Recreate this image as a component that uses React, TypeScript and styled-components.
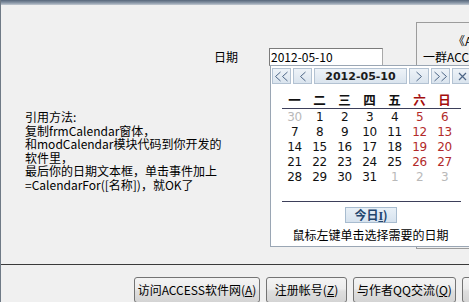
import { createGlobalStyle } from "styled-components";
import styled from "styled-components";

const GlobalStyle = createGlobalStyle`
    html, body {
        margin: 0;
        padding: 0;
        background: #f0f0f0;
        overflow: hidden;
    }
    body {
        font-family: "Noto Sans CJK SC", "Liberation Sans", sans-serif;
        font-size: 12px;
        color: #000;
    }
`;

const Window = styled.div`
    width: 469px;
    height: 302px;
    overflow: hidden;
    border-left: 1px solid #6f7a86;
    box-sizing: border-box;
    position: relative;
`;

const TopBar = styled.div`
    height: 5px;
    margin-left: -1px;
    background: linear-gradient(#56667a, #8d9aaa 60%, #c3cad2);
`;

const Main = styled.div`
    position: relative;
    display: flex;
    border-bottom: 1px solid #3a3a3a;
    box-sizing: border-box;
    height: 260px;
`;

const LeftCol = styled.div`
    flex: 0 0 415px;
    padding: 43px 0 0 24px;
    box-sizing: border-box;
`;

const DateRow = styled.div`
    display: flex;
    align-items: center;
    margin-left: 189px;
    height: 18px;
`;

const DateLabel = styled.span`
    width: 55px;
    line-height: 18px;
`;

const DateInput = styled.div`
    width: 114px;
    height: 18px;
    box-sizing: border-box;
    background: #fff;
    border: 1px solid #a9a9a9;
    border-top-color: #7b7b7b;
    border-left-color: #7b7b7b;
    padding-left: 1px;
    line-height: 16px;
`;

const Instructions = styled.div`
    margin-top: 44px;
    line-height: 13.5px;
    white-space: nowrap;
`;

const RightBox = styled.div`
    flex: 0 0 170px;
    margin-top: 17px;
    height: 227px;
    box-sizing: border-box;
    border: 1px solid #9c9c9c;
    padding: 11px 0 0 6px;
    line-height: 14px;
    white-space: nowrap;
`;

const BoxTitle = styled.div`
    padding-left: 30px;
    margin-bottom: 2px;
`;

const Calendar = styled.div`
    position: absolute;
    left: 269px;
    top: 60px;
    width: 206px;
    height: 182px;
    box-sizing: border-box;
    background: #fff;
    border: 1px solid #9aa6b4;
    padding: 2px 0 0 1px;
    display: flex;
    flex-direction: column;
`;

const NavRow = styled.div`
    display: flex;
    gap: 2px;
    height: 16px;
`;

const NavButton = styled.div<{ $w: number }>`
    flex: 0 0 ${(p) => p.$w}px;
    height: 16px;
    box-sizing: border-box;
    border: 1px solid #b3c2d2;
    background: linear-gradient(#eef3f8, #dae4ee);
    display: flex;
    align-items: center;
    justify-content: center;
    color: #1b1b1b;
    font-family: "DejaVu Sans", sans-serif;
    font-weight: bold;
    font-size: 11px;
`;

const Content = styled.div`
    margin-left: 10px;
    width: 179px;
    display: flex;
    flex-direction: column;
`;

const Grid = styled.div<{ $row: number; $top: number }>`
    display: grid;
    grid-template-columns: repeat(7, 25px);
    grid-auto-rows: ${(p) => p.$row}px;
    margin-top: ${(p) => p.$top}px;
`;

const WeekDay = styled.div<{ $red?: boolean }>`
    text-align: center;
    line-height: 16px;
    font-weight: bold;
    font-size: 12.5px;
    color: ${(p) => (p.$red ? "#a40d0d" : "#111")};
`;

const Day = styled.div<{ $tone: Tone }>`
    text-align: center;
    line-height: 15px;
    font-family: "DejaVu Sans", sans-serif;
    font-size: 12px;
    letter-spacing: -0.5px;
    color: ${(p) =>
        p.$tone === "red" ? "#b22a2a" : p.$tone === "dim" ? "#b9b9b9" : "#111"};
`;

const Rule = styled.div<{ $top: number }>`
    margin-top: ${(p) => p.$top}px;
    height: 1px;
    background: #3d3f5a;
`;

const TodayButton = styled.div`
    align-self: center;
    margin: 5px 0 0 -1px;
    width: 52px;
    height: 16px;
    box-sizing: border-box;
    border: 1px solid #a8bccf;
    background: linear-gradient(#e8f0f7, #d6e2ee);
    text-align: center;
    line-height: 14px;
    color: #23456e;
    font-weight: bold;

    u {
        font-family: "Liberation Serif", serif;
    }
`;

const Hint = styled.div`
    margin: 5px 0 0 -2px;
    text-align: center;
    line-height: 14px;
`;

const ButtonRow = styled.div`
    display: flex;
    gap: 6px;
    padding: 12px 0 0 133px;
`;

const Button = styled.div<{ $w: number }>`
    flex: 0 0 ${(p) => p.$w}px;
    height: 26px;
    box-sizing: border-box;
    border: 1px solid #747474;
    border-radius: 3px;
    background: linear-gradient(#f4f4f4, #ececec 45%, #dedede 55%, #d4d4d4);
    display: flex;
    align-items: center;
    justify-content: center;
    white-space: nowrap;
    padding-bottom: 1px;
`;

const Chevrons = ({ dir, count }: { dir: "l" | "r"; count: number }) => {
    const one = (x: number) =>
        dir === "l"
            ? `M${x + 5} 1 L${x} 5.5 L${x + 5} 10`
            : `M${x} 1 L${x + 5} 5.5 L${x} 10`;
    const w = count === 2 ? 13 : 6;
    return (
        <svg width={w} height={11} viewBox={`0 0 ${w} 11`}>
            <path
                d={count === 2 ? `${one(0.5)} ${one(7.5)}` : one(0.5)}
                fill="none"
                stroke="#4e6686"
                strokeWidth="1"
            />
        </svg>
    );
};

const Close = () => (
    <svg width={9} height={9} viewBox="0 0 9 9">
        <path d="M1 1 L8 8 M8 1 L1 8" fill="none" stroke="#4e6686" strokeWidth="1.2" />
    </svg>
);

type Tone = "normal" | "red" | "dim";

const weeks: [string, Tone][][] = [
    [["30", "dim"], ["1", "normal"], ["2", "normal"], ["3", "normal"], ["4", "normal"], ["5", "red"], ["6", "red"]],
    [["7", "normal"], ["8", "normal"], ["9", "normal"], ["10", "normal"], ["11", "normal"], ["12", "red"], ["13", "red"]],
    [["14", "normal"], ["15", "normal"], ["16", "normal"], ["17", "normal"], ["18", "normal"], ["19", "red"], ["20", "red"]],
    [["21", "normal"], ["22", "normal"], ["23", "normal"], ["24", "normal"], ["25", "normal"], ["26", "red"], ["27", "red"]],
    [["28", "normal"], ["29", "normal"], ["30", "normal"], ["31", "normal"], ["1", "dim"], ["2", "dim"], ["3", "dim"]],
];

const weekNames = ["一", "二", "三", "四", "五", "六", "日"];

function App() {
    return (
        <>
            <GlobalStyle />
            <Window>
                <TopBar />
                <Main>
                    <LeftCol>
                        <DateRow>
                            <DateLabel>日期</DateLabel>
                            <DateInput>2012-05-10</DateInput>
                        </DateRow>
                        <Instructions>
                            <div>引用方法:</div>
                            <div>复制frmCalendar窗体，</div>
                            <div>和modCalendar模块代码到你开发的</div>
                            <div>软件里，</div>
                            <div>最后你的日期文本框，单击事件加上</div>
                            <div>=CalendarFor([名称])，就OK了</div>
                        </Instructions>
                    </LeftCol>
                    <RightBox>
                        <BoxTitle>《ACCESS软件网》</BoxTitle>
                        <div>一群ACCESS爱好者的</div>
                        <div>社区论坛</div>
                    </RightBox>
                    <Calendar>
                        <NavRow>
                            <NavButton $w={19}><Chevrons dir="l" count={2} /></NavButton>
                            <NavButton $w={19}><Chevrons dir="l" count={1} /></NavButton>
                            <NavButton $w={93}>2012-05-10</NavButton>
                            <NavButton $w={20}><Chevrons dir="r" count={1} /></NavButton>
                            <NavButton $w={19}><Chevrons dir="r" count={2} /></NavButton>
                            <NavButton $w={20}><Close /></NavButton>
                        </NavRow>
                        <Content>
                            <Grid $row={16} $top={8}>
                                {weekNames.map((n, i) => (
                                    <WeekDay key={n} $red={i >= 5}>{n}</WeekDay>
                                ))}
                            </Grid>
                            <Rule $top={0} />
                            <Grid $row={15} $top={1}>
                                {weeks.flat().map(([d, tone], i) => (
                                    <Day key={i} $tone={tone}>{d}</Day>
                                ))}
                            </Grid>
                            <Rule $top={16} />
                            <TodayButton>今日<u>I</u>)</TodayButton>
                            <Hint>鼠标左键单击选择需要的日期</Hint>
                        </Content>
                    </Calendar>
                </Main>
                <ButtonRow>
                    <Button $w={126}>访问ACCESS软件网(<u>A</u>)</Button>
                    <Button $w={81}>注册帐号(<u>Z</u>)</Button>
                    <Button $w={103}>与作者QQ交流(<u>Q</u>)</Button>
                    <Button $w={70}>关闭(<u>X</u>)</Button>
                </ButtonRow>
            </Window>
        </>
    );
}

export default App;
